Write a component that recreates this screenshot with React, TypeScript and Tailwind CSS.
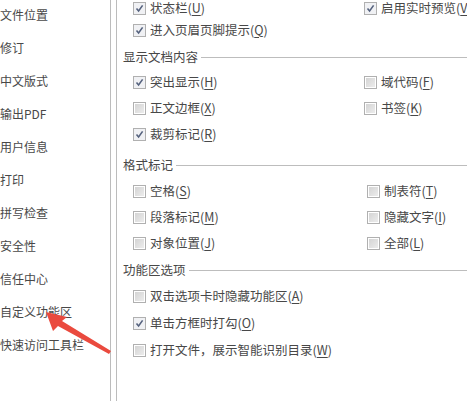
import { ReactNode } from "react";

// Options page: left category list + display settings panel
const menu = [
  "文件位置",
  "修订",
  "中文版式",
  "输出PDF",
  "用户信息",
  "打印",
  "拼写检查",
  "安全性",
  "信任中心",
  "自定义功能区",
  "快速访问工具栏",
];

function Box({ checked }: { checked?: boolean }) {
  return (
    <span className="relative flex h-[13px] w-[13px] shrink-0 items-center justify-center border border-[#b0b0b0] bg-white">
      {checked ? (
        <svg width="11" height="11" viewBox="0 0 11 11" className="absolute">
          <rect x="0" y="0" width="11" height="11" fill="#f0f1f4" />
          <path d="M2.5 5.5 L4.6 8 L8.6 2.4" fill="none" stroke="#55627e" strokeWidth="1.6" />
        </svg>
      ) : (
        <span className="h-[9px] w-[9px] bg-gradient-to-br from-[#d4d4d4] to-[#ececec]" />
      )}
    </span>
  );
}

function Opt({ label, k, checked }: { label: string; k: string; checked?: boolean }) {
  return (
    <div className="flex items-center gap-[4px]">
      <Box checked={checked} />
      <span className="whitespace-nowrap">
        {label}(<span className="underline underline-offset-2">{k}</span>)
      </span>
    </div>
  );
}

function Row({ h, children }: { h: string; children: ReactNode }) {
  return <div className={`grid grid-cols-[231px_1fr] items-center pl-[16px] ${h}`}>{children}</div>;
}

function Header({ title, className }: { title: string; className: string }) {
  return (
    <div className={`flex h-[20px] items-center pl-[6px] ${className}`}>
      <span className="whitespace-nowrap">{title}</span>
      <span className="ml-[3px] h-px flex-1 bg-[#bdbdbd]" />
    </div>
  );
}

export default function App() {
  return (
    <div
      className="relative flex h-[401px] w-[467px] overflow-hidden bg-white text-[#484848]"
      style={{ fontFamily: '"Noto Sans CJK SC", "Noto Sans", sans-serif' }}
    >
      <aside className="w-[111px] shrink-0 border-r border-[#bcbcbc] text-[12px]">
        <div className="-mt-[2px] flex flex-col">
          {menu.map((m) => (
            <div key={m} className="flex h-[33px] items-center whitespace-nowrap">
              {m}
            </div>
          ))}
        </div>
      </aside>

      <section className="ml-[5px] flex-1 border-l border-[#bcbcbc] text-[12.5px]">
        <div className="-mt-[3px]">
          <Row h="h-[22px]">
            <Opt label="状态栏" k="U" checked />
            <Opt label="启用实时预览" k="V" checked />
          </Row>
          <Row h="h-[22px]">
            <Opt label="进入页眉页脚提示" k="Q" checked />
          </Row>
        </div>

        <Header title="显示文档内容" className="mt-[6px]" />
        <div className="mt-[2px]">
          <Row h="h-[26px]">
            <Opt label="突出显示" k="H" checked />
            <Opt label="域代码" k="F" />
          </Row>
          <Row h="h-[26px]">
            <Opt label="正文边框" k="X" />
            <Opt label="书签" k="K" />
          </Row>
          <Row h="h-[26px]">
            <Opt label="裁剪标记" k="R" checked />
          </Row>
        </div>

        <Header title="格式标记" className="mt-[8px]" />
        <div className="mt-[3px]">
          <Row h="h-[26px]">
            <Opt label="空格" k="S" />
            <div className="pl-[3px]">
              <Opt label="制表符" k="T" />
            </div>
          </Row>
          <Row h="h-[26px]">
            <Opt label="段落标记" k="M" />
            <div className="pl-[3px]">
              <Opt label="隐藏文字" k="I" />
            </div>
          </Row>
          <Row h="h-[26px]">
            <Opt label="对象位置" k="J" />
            <div className="pl-[3px]">
              <Opt label="全部" k="L" />
            </div>
          </Row>
        </div>

        <Header title="功能区选项" className="mt-[4px]" />
        <div className="mt-[3px]">
          <Row h="h-[27px]">
            <Opt label="双击选项卡时隐藏功能区" k="A" />
          </Row>
          <Row h="h-[27px]">
            <Opt label="单击方框时打勾" k="O" checked />
          </Row>
          <Row h="h-[27px]">
            <Opt label="打开文件，展示智能识别目录" k="W" />
          </Row>
        </div>
      </section>

      {/* red annotation arrow */}
      <svg className="pointer-events-none absolute left-0 top-0" width="467" height="401">
        <polygon
          points="46,312 67,317 62,321 111,351 109,354 58,326 53,331"
          fill="#ea4a3e"
        />
      </svg>
    </div>
  );
}
